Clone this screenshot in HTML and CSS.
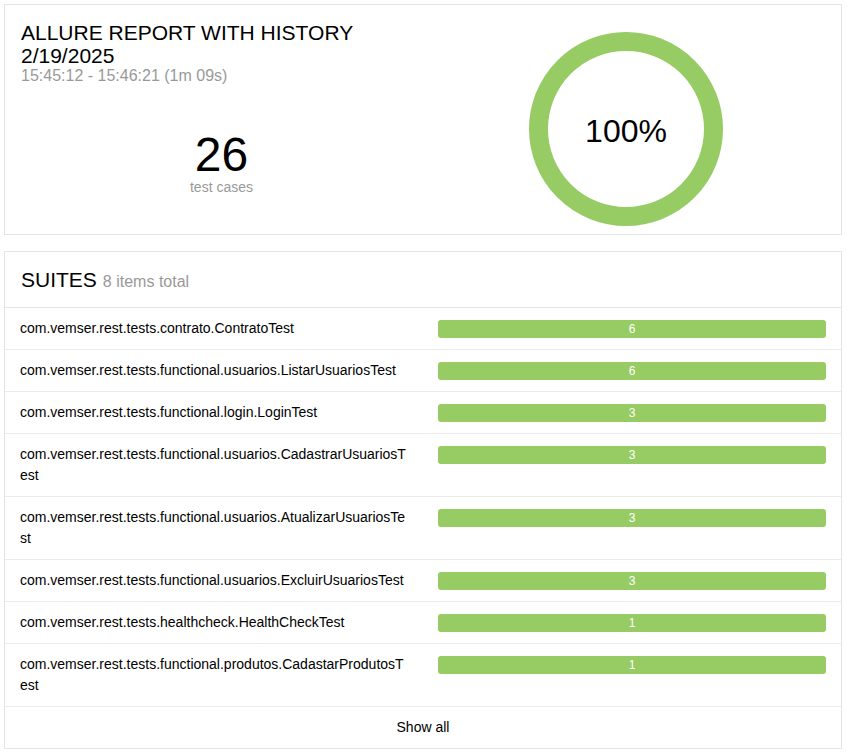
FILE: index.html
```html
<!DOCTYPE html>
<html>
<head>
<meta charset="utf-8">
<link rel="stylesheet" href="styles.css">
</head>
<body>
<div class="page">
  <section class="card summary">
    <div class="summary-left">
      <div class="report-title">ALLURE REPORT WITH HISTORY<br>2/19/2025</div>
      <div class="report-time">15:45:12 - 15:46:21 (1m 09s)</div>
      <div class="stat">
        <div class="stat-num">26</div>
        <div class="stat-label">test cases</div>
      </div>
    </div>
    <div class="summary-right">
      <svg class="donut" width="194" height="194" viewBox="0 0 194 194">
        <circle cx="97" cy="97" r="87.5" fill="none" stroke="#97cc64" stroke-width="19"/>
        <text x="97" y="109.5" text-anchor="middle" class="donut-text">100%</text>
      </svg>
    </div>
  </section>

  <section class="card suites">
    <div class="suites-head"><span class="suites-title">SUITES</span><span class="suites-count">8 items total</span></div>
    <div class="row">
      <div class="name">com.vemser.rest.tests.contrato.ContratoTest</div>
      <div class="barcell"><div class="bar">6</div></div>
    </div>
    <div class="row">
      <div class="name">com.vemser.rest.tests.functional.usuarios.ListarUsuariosTest</div>
      <div class="barcell"><div class="bar">6</div></div>
    </div>
    <div class="row">
      <div class="name">com.vemser.rest.tests.functional.login.LoginTest</div>
      <div class="barcell"><div class="bar">3</div></div>
    </div>
    <div class="row">
      <div class="name">com.vemser.rest.tests.functional.usuarios.CadastrarUsuariosTest</div>
      <div class="barcell"><div class="bar">3</div></div>
    </div>
    <div class="row">
      <div class="name">com.vemser.rest.tests.functional.usuarios.AtualizarUsuariosTest</div>
      <div class="barcell"><div class="bar">3</div></div>
    </div>
    <div class="row">
      <div class="name">com.vemser.rest.tests.functional.usuarios.ExcluirUsuariosTest</div>
      <div class="barcell"><div class="bar">3</div></div>
    </div>
    <div class="row">
      <div class="name">com.vemser.rest.tests.healthcheck.HealthCheckTest</div>
      <div class="barcell"><div class="bar">1</div></div>
    </div>
    <div class="row">
      <div class="name">com.vemser.rest.tests.functional.produtos.CadastarProdutosTest</div>
      <div class="barcell"><div class="bar">1</div></div>
    </div>
    <div class="show-all">Show all</div>
  </section>
</div>
</body>
</html>
```

FILE: styles.css
```css
* { box-sizing: border-box; }
html, body { margin: 0; padding: 0; background: #fff; }
body {
  font-family: "Liberation Sans", Arial, sans-serif;
  color: #000;
}
.page {
  padding: 4px 6px 0 4px;
  display: flex;
  flex-direction: column;
  gap: 16px;
}
.card {
  border: 1px solid #e4e4e4;
  background: #fff;
}
.summary {
  display: grid;
  grid-template-columns: 433px 1fr;
}
.summary-left {
  padding: 16px 0 0 16px;
}
.report-title {
  font-size: 21px;
  line-height: 23px;
}
.report-time {
  font-size: 16px;
  line-height: 18px;
  color: #999;
}
.stat {
  margin-top: 48px;
  margin-left: -16px;
  text-align: center;
}
.stat-num {
  font-size: 48px;
  line-height: 44px;
}
.stat-label {
  font-size: 14px;
  line-height: 16px;
  color: #999;
  margin-top: 2px;
}
.summary-right {
  padding: 27px 0 8px 91px;
}
.donut { display: block; }
.donut-text {
  font-family: "Liberation Sans", Arial, sans-serif;
  font-size: 32px;
  fill: #000;
}
.suites-head {
  display: flex;
  align-items: baseline;
  gap: 6px;
  height: 56px;
  padding: 16px 16px 0;
  border-bottom: 1px solid #e4e4e4;
}
.suites-title { font-size: 21px; line-height: 23px; }
.suites-count { font-size: 16px; line-height: 18px; color: #999; }
.row {
  display: grid;
  grid-template-columns: 418px 418px;
  border-bottom: 1px solid #ebebeb;
  font-size: 14px;
  line-height: 21px;
}
.name {
  padding: 10px 15px;
  word-break: break-all;
}
.barcell {
  padding: 12px 15px 0;
}
.bar {
  height: 18px;
  background: #97cc64;
  border-radius: 3px;
  color: #fff;
  font-size: 12px;
  line-height: 18px;
  text-align: center;
}
.show-all {
  padding: 10px 15px;
  font-size: 14px;
  line-height: 21px;
  text-align: center;
}
```
